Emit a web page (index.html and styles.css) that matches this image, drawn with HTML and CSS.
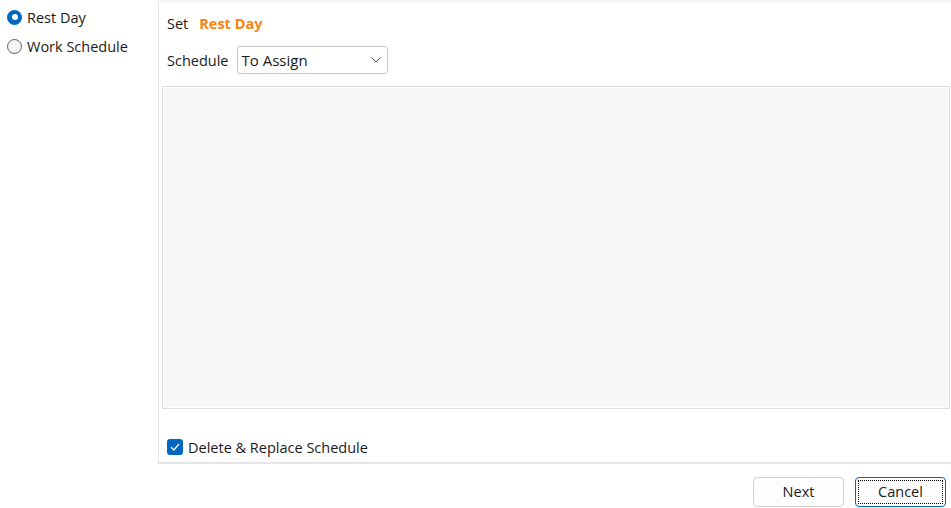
FILE: index.html
```html
<!DOCTYPE html>
<html>
<head>
<meta charset="utf-8">
<link rel="stylesheet" href="styles.css">
</head>
<body>
<div class="app">
  <div class="top">
    <div class="side">
      <label class="radio-row">
        <span class="radio checked"><span class="dot"></span></span>
        <span>Rest Day</span>
      </label>
      <label class="radio-row">
        <span class="radio"></span>
        <span>Work Schedule</span>
      </label>
    </div>
    <div class="panel">
      <div class="panel-inner">
        <div class="set-row">
          <span>Set</span>
          <span class="set-value">Rest Day</span>
        </div>
        <div class="sched-row">
          <span>Schedule</span>
          <div class="select">
            <span>To Assign</span>
            <svg class="chev" width="10" height="6" viewBox="0 0 10 6"><path d="M0.5 0.5 L5 5 L9.5 0.5" fill="none" stroke="#555" stroke-width="1"/></svg>
          </div>
        </div>
        <div class="list-box"></div>
        <div class="check-row">
          <span class="checkbox">
            <svg width="10" height="8" viewBox="0 0 10 8"><path d="M1 4.2 L3.8 7 L9 1" fill="none" stroke="#fff" stroke-width="1.2"/></svg>
          </span>
          <span>Delete &amp; Replace Schedule</span>
        </div>
      </div>
    </div>
  </div>
  <div class="buttons">
    <button class="btn">Next</button>
    <button class="btn focus"><span class="focus-rect">Cancel</span></button>
  </div>
</div>
</body>
</html>
```

FILE: styles.css
```css
html, body {
  margin: 0;
  padding: 0;
  background: #ffffff;
}
body {
  font-family: "Open Sans", "Noto Sans", sans-serif;
  font-size: 14.5px;
  color: #1a1a1a;
  width: 951px;
  height: 508px;
  overflow: hidden;
}
.app {
  display: flex;
  flex-direction: column;
  height: 508px;
}
.top {
  display: flex;
  height: 464px;
}
.side {
  width: 158px;
  padding-top: 7px;
  box-sizing: border-box;
  display: flex;
  flex-direction: column;
  gap: 9px;
}
.radio-row {
  display: flex;
  align-items: center;
  height: 20px;
  padding-left: 7px;
  gap: 5px;
}
.radio {
  width: 15px;
  height: 15px;
  border-radius: 50%;
  border: 1px solid #5f5f5f;
  box-sizing: border-box;
  background: #f5f5f5;
  display: flex;
  align-items: center;
  justify-content: center;
}
.radio.checked {
  border: none;
  background: #0067c0;
}
.radio .dot {
  width: 6px;
  height: 6px;
  border-radius: 50%;
  background: #ffffff;
}
.panel {
  flex: 1;
  border-left: 1px solid #e8e8e8;
  border-top: 3px solid #f7f7f7;
  border-bottom: 2px solid #e6e6e6;
  box-sizing: border-box;
  background: #ffffff;
}
.panel-inner {
  display: flex;
  flex-direction: column;
  padding: 8px 1px 0 3px;
  height: 100%;
  box-sizing: border-box;
}
.set-row {
  display: flex;
  align-items: center;
  height: 24px;
  padding-left: 5px;
  gap: 11px;
}
.set-value {
  color: #f7860d;
  font-weight: 700;
}
.sched-row {
  display: flex;
  align-items: center;
  padding-left: 5px;
  margin-top: 11px;
  gap: 8px;
}
.select {
  width: 151px;
  height: 28px;
  border: 1px solid #c8c8c8;
  border-radius: 3px;
  box-sizing: border-box;
  display: flex;
  align-items: center;
  justify-content: space-between;
  padding: 0 5px 0 4px;
  font-size: 15px;
}
.chev {
  margin-right: 1px;
}
.list-box {
  margin-top: 12px;
  height: 323px;
  border: 1px solid #dedede;
  box-shadow: inset 0 0 0 1px #ffffff;
  background: #f7f7f7;
  box-sizing: border-box;
}
.check-row {
  display: flex;
  align-items: center;
  gap: 5px;
  padding-left: 5px;
  margin-top: 29px;
  height: 18px;
}
.checkbox {
  width: 16px;
  height: 16px;
  border-radius: 3px;
  background: #0067c0;
  display: flex;
  align-items: center;
  justify-content: center;
}
.buttons {
  display: flex;
  justify-content: flex-end;
  gap: 11px;
  padding: 13px 5px 0 0;
}
.btn {
  width: 91px;
  height: 30px;
  font-family: "Open Sans", "Noto Sans", sans-serif;
  font-size: 14.5px;
  color: #1a1a1a;
  background: #fdfdfd;
  border: 1px solid #d0d0d0;
  border-radius: 4px;
  padding: 0 0 2px 0;
  display: flex;
  align-items: center;
  justify-content: center;
}
.btn.focus {
  border: 1px solid #0067c0;
  padding: 2px;
}
.focus-rect {
  display: flex;
  align-items: center;
  justify-content: center;
  width: 100%;
  height: 100%;
  border: 1px dotted #000000;
  box-sizing: border-box;
  padding-bottom: 2px;
}
```
